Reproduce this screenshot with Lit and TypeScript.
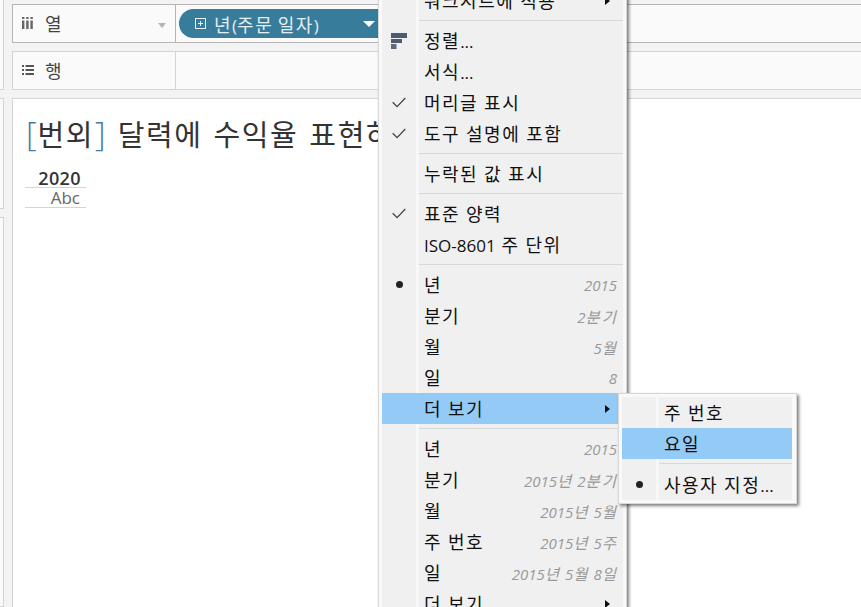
import { LitElement, html, css, svg } from "lit";
import { customElement } from "lit/decorators.js";

type Item = { t?: string; sep?: boolean; mark?: "check" | "dot" | "sort"; hint?: string; arrow?: boolean; on?: boolean };

const main: Item[] = [
  { t: "워크시트에 적용", arrow: true },
  { sep: true },
  { t: "정렬...", mark: "sort" },
  { t: "서식..." },
  { t: "머리글 표시", mark: "check" },
  { t: "도구 설명에 포함", mark: "check" },
  { sep: true },
  { t: "누락된 값 표시" },
  { sep: true },
  { t: "표준 양력", mark: "check" },
  { t: "ISO-8601 주 단위" },
  { sep: true },
  { t: "년", mark: "dot", hint: "2015" },
  { t: "분기", hint: "2분기" },
  { t: "월", hint: "5월" },
  { t: "일", hint: "8" },
  { t: "더 보기", arrow: true, on: true },
  { sep: true },
  { t: "년", hint: "2015" },
  { t: "분기", hint: "2015년 2분기" },
  { t: "월", hint: "2015년 5월" },
  { t: "주 번호", hint: "2015년 5주" },
  { t: "일", hint: "2015년 5월 8일" },
  { t: "더 보기", arrow: true },
];
const sub: Item[] = [
  { t: "주 번호" },
  { t: "요일", on: true },
  { sep: true },
  { t: "사용자 지정...", mark: "dot" },
];

/* Hangul runs get their own span: the reference's Korean face is wider than the installed one, its Latin is not. */
const ko = (s: string) =>
  s.split(/([가-힣]+)/).map((p, i) => (i % 2 ? html`<span class="k">${p}</span>` : p));

const markIcon = (m?: string) => {
  if (m === "check")
    return html`<svg width="14" height="11" viewBox="0 0 14 11"><path d="M.7 5.2l4.4 4.4L13.3 1" fill="none" stroke="#444" stroke-width="1.3"/></svg>`;
  if (m === "dot") return html`<span class="dot"></span>`;
  if (m === "sort")
    return html`<svg width="16" height="16" viewBox="0 0 16 16">${svg`<rect width="16" height="5" fill="#4f5b6e"/><rect y="6" width="11" height="4" fill="#4f5b6e"/><rect y="11" width="5.500" height="5" fill="#5d6a7d"/>`}</svg>`;
  return "";
};

const renderItems = (items: Item[]) =>
  items.map((i) =>
    i.sep
      ? html`<div class="sep"></div>`
      : html`<div class="item ${i.on ? "on" : ""}">
          <span class="gut">${markIcon(i.mark)}</span>
          <span class="lab">${ko(i.t ?? "")}</span>
          ${i.hint ? html`<span class="hint">${ko(i.hint)}</span>` : ""}
          ${i.arrow ? html`<span class="arr"></span>` : ""}
        </div>`
  );

@customElement("app-root")
export class AppRoot extends LitElement {
  static styles = css`
    :host {
      display: block;
      width: 861px;
      height: 607px;
      position: relative;
      overflow: hidden;
      background: #f3f3f3;
      font-family: "Open Sans", "Noto Sans CJK KR", sans-serif;
      color: #333;
    }
    .k { font-size: 18px; letter-spacing: 1.5px; }
    .page { display: grid; grid-template-columns: 4px 1fr; column-gap: 8px; height: 607px; }
    .left { display: flex; flex-direction: column; gap: 8px; margin-top: -2px; }
    .left div { background: #fafafa; border: 1px solid #d4d4d4; border-left: 0; box-sizing: border-box; }
    .left .a { height: 92px; }
    .left .b { height: 111px; }
    .left .c { flex: 1; }
    .col { display: flex; flex-direction: column; margin-right: -4px; padding-top: 4px; }
    .shelf {
      display: grid; grid-template-columns: 163px 1fr; height: 39px;
      background: #fafafa; border: 1px solid #d4d4d4; box-sizing: border-box; margin-bottom: 8px;
    }
    .shelf.dark { border-color: #b4b4b4; }
    .cap { display: flex; align-items: center; border-right: 1px solid #d4d4d4; font-size: 17px; position: relative; color: #444; height: 37px; padding-bottom: 2px; box-sizing: border-box; }
    .dark .cap { border-right-color: #b4b4b4; }
    .ico { width: 32px; display: flex; justify-content: center; padding-right: 3px; box-sizing: border-box; }
    .drop { position: absolute; right: 9px; top: 18px; width: 0; height: 0; border: 4px solid transparent; border-top: 5px solid #b4b4b4; }
    .pills { display: flex; align-items: center; padding-left: 3px; height: 37px; }
    .pill {
      width: 210px; height: 29px; background: #387c9c; border-radius: 15px 0 0 15px; color: #e4eef2;
      display: flex; align-items: center; font-size: 17px; box-sizing: border-box; padding-left: 16px; position: relative;
    }
    .plus { width: 9px; height: 9px; border: 1px solid #e6eff3; margin-right: 8px; position: relative; }
    .plus::before { content: ""; position: absolute; left: 2px; right: 2px; top: 4px; height: 1px; background: #e6eff3; }
    .plus::after { content: ""; position: absolute; top: 2px; bottom: 2px; left: 4px; width: 1px; background: #e6eff3; }
    .pillarrow { position: absolute; left: 184px; top: 12px; width: 0; height: 0; border: 6px solid transparent; border-top: 6px solid #fff; border-bottom: 0; }
    .view { flex: 1; background: #fff; border: 1px solid #d4d4d4; border-bottom: 0; box-sizing: border-box; padding: 16px 12px; overflow: hidden; }
    .title { font-size: 27px; line-height: 40px; white-space: nowrap; color: #333; word-spacing: 4px; }
    .title .k { font-size: 29px; letter-spacing: 1.6px; }
    .title i { font-style: normal; color: #4a7ba0; font-size: 33px; font-weight: 300; line-height: 30px; padding: 0 1px; }
    .tbl { width: 61px; margin-top: 12px; }
    .yr { font-weight: 600; font-size: 18px; line-height: 18px; text-align: right; padding-right: 5px; border-bottom: 1px solid #d4d4d4; color: #333; height: 18px; letter-spacing: .4px; margin-top: -1px; padding-top: 2px; }
    .abc { font-size: 17px; line-height: 20px; height: 19px; text-align: right; padding-right: 6px; border-bottom: 1px solid #d4d4d4; color: #666; }
    .menu {
      position: absolute; background: #f9f9f9; border: 1px solid #d8d8d8; box-sizing: border-box;
      box-shadow: 2px 2px 3px rgba(0,0,0,.5); padding: 3px; font-size: 17px; color: #111; word-spacing: 1.5px;
    }
    .menu.m1 { left: 378px; top: -19px; width: 249px; height: 640px; }
    .menu.m2 { left: 618px; top: 393px; width: 179px; height: 111px; padding-right: 4px; }
    .inner {
      height: 100%;
      background: linear-gradient(90deg, #f0f0f0 34px, #f7f7f7 34px, #f7f7f7 37px, #f0f0f0 37px);
    }
    .item { height: 31px; display: flex; align-items: center; white-space: nowrap; }
    .gut { width: 34px; height: 100%; display: flex; align-items: center; justify-content: center; margin-right: 8px; flex: none; }
    .lab { flex: 1; line-height: 31px; padding-top: 2px; }
    .item.on { background: rgba(144, 200, 246, .96); }
    .hint { font-style: italic; font-size: 15px; color: #999; padding-right: 6px; padding-top: 1px; word-spacing: 0; }
    .hint .k { font-size: 15.5px; letter-spacing: 2px; }
    .hint .k:last-child { margin-right: -1px; }
    .arr { width: 0; height: 0; border: 4.5px solid transparent; border-left: 5px solid #111; border-right: 0; margin-right: 13px; }
    .sep { height: 1px; background: #d8d8d8; margin: 4px 0 4px 37px; }
    .m2 .sep { margin-bottom: 5px; }
    .dot { width: 7px; height: 7px; background: #222; border-radius: 50%; }
  `;

  render() {
    return html`
      <div class="page">
        <div class="left"><div class="a"></div><div class="b"></div><div class="c"></div></div>
        <div class="col">
          <div class="shelf dark">
            <div class="cap">
              <span class="ico"><svg width="11" height="12" viewBox="0 0 11 12"><path d="M0 0h2.400v2H0zM4.200 0h2.400v2H4.200zM8.400 0h2.400v2H8.400zM0 3.500h2.400V12H0zM4.200 3.500h2.400V12H4.200zM8.400 3.500h2.400V12H8.400z" fill="#666"/></svg></span>
              <span>${ko("열")}</span><span class="drop"></span>
            </div>
            <div class="pills">
              <div class="pill"><span class="plus"></span><span>${ko("년(주문 일자)")}</span><span class="pillarrow"></span></div>
            </div>
          </div>
          <div class="shelf">
            <div class="cap">
              <span class="ico"><svg width="12" height="10" viewBox="0 0 12 10"><path d="M0 0h2v2H0zM3.500 0H12v2H3.500zM0 4h2v2H0zM3.500 4H12v2H3.500zM0 8h2v2H0zM3.500 8H12v2H3.500z" fill="#555"/></svg></span>
              <span>${ko("행")}</span>
            </div>
            <div></div>
          </div>
          <div class="view">
            <div class="title"><i>[</i>${ko("번외")}<i>]</i> ${ko("달력에 수익율 표현하기")}</div>
            <div class="tbl"><div class="yr">2020</div><div class="abc">Abc</div></div>
          </div>
        </div>
      </div>
      <div class="menu m1"><div class="inner">${renderItems(main)}</div></div>
      <div class="menu m2"><div class="inner">${renderItems(sub)}</div></div>
    `;
  }
}
